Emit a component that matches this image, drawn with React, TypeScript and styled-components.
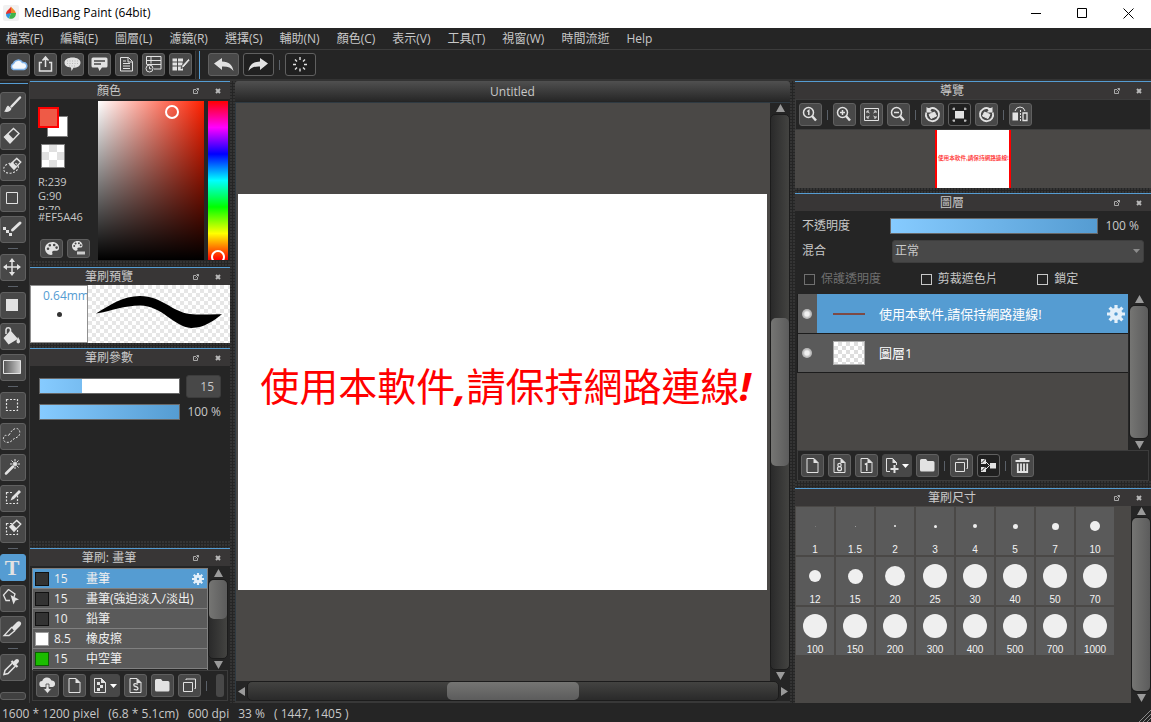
import React from "react";
import styled, { createGlobalStyle, css } from "styled-components";

const BLUE = "#559cd2";
const BG = "#252525";
const LINE = "#3c3c3c";
const PANE = "#4a4846";
const TEXT = "#c8c8c8";

const GlobalStyle = createGlobalStyle`
  *, *::before, *::after { box-sizing: border-box; }
  body {
    margin: 0;
    background: ${BG};
    color: ${TEXT};
    font: 12px/16px "Open Sans", "Noto Sans CJK TC", sans-serif;
  }
  button, input, select { font: inherit; color: inherit; margin: 0; padding: 0; }
  ul { list-style: none; margin: 0; padding: 0; }
  svg { display: block; flex: none; }
`;

const dots = css`
  background: ${BG} radial-gradient(circle at 1px 1px, #343434 1px, transparent 1px) 0 0 / 3px 3px;
`;
const checker = (a: string, size: number) => css`
  background: repeating-conic-gradient(${a} 0 25%, #fff 0 50%) 0 0 / ${size}px ${size}px;
`;

/* ---------- window frame ---------- */
const Window = styled.div`
  min-height: 100vh;
  display: flex;
  flex-direction: column;
`;
const TitleBar = styled.header`
  height: 28px;
  display: flex;
  align-items: center;
  padding-bottom: 2px;
  background: #fff;
  color: #000;
`;
const AppLogo = styled.svg`
  width: 16px;
  height: 16px;
  margin: 0 5px 0 3px;
`;
const AppName = styled.h1`
  flex: 1;
  margin: 0;
  font-size: 12px;
  font-weight: 400;
`;
const WindowButton = styled.button`
  width: 46px;
  height: 24px;
  border: 0;
  background: none;
  display: grid;
  place-items: center;
`;
const MenuBar = styled.nav`
  height: 22px;
  display: flex;
  gap: 17px;
  padding: 0 6px;
  border-bottom: 1px solid ${LINE};
`;
const MenuItem = styled.button`
  border: 0;
  background: none;
  white-space: nowrap;
`;
const TopBar = styled.div`
  height: 31px;
  display: flex;
  border-bottom: 2px solid #333;
`;
const TopGroup = styled.div<{ $dark?: boolean }>`
  display: flex;
  align-items: center;
  gap: 4px;
  padding: 0 3px 0 7px;
  background: ${(p) => (p.$dark ? "#181818" : "none")};
`;
const TopSplitter = styled.div`
  width: 5px;
  margin: 1px 1px 0 0;
  border-left: 1px solid ${LINE};
  border-right: 1px solid ${BLUE};
`;
const Body = styled.main`
  flex: 1;
  display: flex;
`;
const StatusBar = styled.footer`
  height: 19px;
  display: flex;
  align-items: center;
  gap: 9px;
  padding: 2px 0 0 2px;
  white-space: pre;
`;
const StatusFill = styled.span`
  flex: 1;
`;

/* ---------- buttons ---------- */
const IconButton = styled.button<{ $w?: number; $h?: number; $flat?: boolean; $open?: boolean }>`
  flex: none;
  width: ${(p) => p.$w ?? 23}px;
  height: ${(p) => p.$h ?? 23}px;
  border: 1px solid ${(p) => (p.$flat ? "#484848" : "#606060")};
  border-radius: 3px;
  background: ${(p) => (p.$open ? "#202020" : "#484848")};
  display: flex;
  align-items: center;
  justify-content: center;
  overflow: hidden;
  color: #e2e2e2;
`;
const Separator = styled.span<{ $row?: boolean }>`
  flex: none;
  width: ${(p) => (p.$row ? 12 : 3)}px;
  height: ${(p) => (p.$row ? 3 : 12)}px;
  border: 1px solid transparent;
  background: #5a6068;
  background-clip: padding-box;
`;
const CutButton = styled.span`
  width: 8px;
  height: 23px;
  margin-left: 4px;
  border-radius: 3px;
  background: #484848;
`;

/* ---------- tool column ---------- */
const ToolColumn = styled.aside`
  flex: none;
  width: 30px;
  padding-top: 2px;
  border-right: 1px solid ${LINE};
`;
const ToolList = styled.div`
  width: 28px;
  display: flex;
  flex-direction: column;
  gap: 4px;
  padding-top: 8px;
  border-top: 1px solid ${BLUE};
`;
const ToolButton = styled.button<{ $on?: boolean }>`
  width: 26px;
  height: 27px;
  padding: 0;
  border: 1px solid ${(p) => (p.$on ? BLUE : "#606060")};
  border-radius: 3px;
  background: ${(p) => (p.$on ? BLUE : "#484848")};
  color: #e2e2e2;
  display: flex;
  align-items: center;
  justify-content: center;
  overflow: hidden;
`;
const TextGlyph = styled.span`
  padding-right: 2px;
  font: 700 22px/24px "Liberation Serif", serif;
`;
const ToolSeparator = styled(Separator)`
  margin-left: 7px;
`;
const ToolStub = styled.div`
  width: 26px;
  height: 8px;
  margin-top: 7px;
  border: 1px solid #606060;
  border-radius: 3px;
  background: #404040;
`;

/* ---------- docks ---------- */
const Dock = styled.section<{ $w: number }>`
  flex: none;
  width: ${(p) => p.$w}px;
  display: flex;
  flex-direction: column;
`;
const DockHeader = styled.header`
  flex: none;
  height: 18px;
  display: flex;
  align-items: center;
  gap: 6px;
  padding-right: 4px;
  border-top: 1px solid ${BLUE};
  background: #383636;
`;
const DockTitle = styled.h2`
  flex: 1;
  margin: 0 -6px 0 0;
  font-size: 12px;
  line-height: 16px;
  font-weight: 400;
  text-align: center;
`;
const DockButton = styled.button`
  width: 16px;
  height: 16px;
  border: 0;
  background: none;
  display: grid;
  place-items: center;
`;
const Gutter = styled.div<{ $h: number }>`
  flex: none;
  height: ${(p) => p.$h}px;
  ${dots}
`;
const SideGutter = styled.div`
  flex: none;
  width: 5px;
  ${dots}
`;
const DockToolbar = styled.div`
  flex: none;
  height: 31px;
  display: flex;
  align-items: center;
  gap: 4px;
  padding: 0 3px;
  border: 1px solid ${LINE};
`;

/* ---------- scroll bars ---------- */
const ScrollFrame = styled.div<{ $across?: boolean }>`
  flex: none;
  display: flex;
  flex-direction: ${(p) => (p.$across ? "row" : "column")};
  align-items: stretch;
  ${(p) => (p.$across ? "height: 20px;" : "width: 20px;")}
  background: ${BG};
`;
const ScrollArrow = styled.span`
  flex: 0 0 11px;
  display: grid;
  place-items: center;
`;
const ScrollTrack = styled.div<{ $across?: boolean }>`
  flex: 1;
  display: flex;
  flex-direction: ${(p) => (p.$across ? "row" : "column")};
  border: 1px solid #1c1c1c;
  border-radius: 5px;
  background: ${(p) => (p.$across ? "linear-gradient(#434341, #2a2a2a)" : "linear-gradient(90deg, #2a2a2a, #434341)")};
`;
const ScrollSpace = styled.div<{ $n: number }>`
  flex: ${(p) => p.$n} 0 0;
`;
const ScrollThumb = styled.div<{ $n: number; $across?: boolean }>`
  flex: ${(p) => p.$n} 0 0;
  border-radius: 5px;
  background: linear-gradient(${(p) => (p.$across ? "180deg" : "90deg")}, #757573, #5c5c5c);
`;

function ScrollBar({ before, size, after, across }: { before: number; size: number; after: number; across?: boolean }) {
  const first = across ? "M8 0v9L1 4.500z" : "M0 8h9L4.500 0z";
  const last = across ? "M1 0v9l7-4.500z" : "M0 1h9L4.500 9z";
  return (
    <ScrollFrame $across={across} aria-hidden="true">
      <ScrollArrow><svg width="9" height="9"><path d={first} fill="#9a9a9a" /></svg></ScrollArrow>
      <ScrollTrack $across={across}>
        <ScrollSpace $n={before} />
        <ScrollThumb $n={size} $across={across} />
        <ScrollSpace $n={after} />
      </ScrollTrack>
      <ScrollArrow><svg width="9" height="9"><path d={last} fill="#9a9a9a" /></svg></ScrollArrow>
    </ScrollFrame>
  );
}

/* ---------- form parts ---------- */
const Slider = styled.input.attrs({ type: "range" })<{ $fill: number }>`
  appearance: none;
  flex: 1;
  min-width: 0;
  height: 16px;
  border: 1px solid #686868;
  background:
    linear-gradient(90deg, transparent ${(p) => p.$fill}%, #fff ${(p) => p.$fill}%),
    linear-gradient(90deg, #86cbff, ${BLUE});
  &::-webkit-slider-thumb { appearance: none; width: 1px; height: 14px; background: transparent; }
`;
const NumberBox = styled.input`
  width: 35px;
  height: 23px;
  padding-right: 6px;
  border: 1px solid #3c3c3c;
  border-radius: 3px;
  background: #484848;
  text-align: right;
`;
const Percent = styled.output`
  width: 35px;
  white-space: nowrap;
  text-align: right;
`;

/* ---------- colour dock ---------- */
const ColorBody = styled.div`
  height: 162px;
  display: flex;
  gap: 4px;
  padding: 2px 2px 1px 8px;
`;
const ColorInfo = styled.div`
  width: 56px;
  display: flex;
  flex-direction: column;
  font-size: 11px;
  line-height: 14px;
`;
const SwatchPair = styled.div`
  position: relative;
  height: 30px;
  margin-top: 6px;
`;
const Swatch = styled.button<{ $front?: boolean }>`
  position: absolute;
  width: 21px;
  height: 21px;
  ${(p) =>
    p.$front
      ? "left: 0; top: 0; background: #ef5a46; border: 2px solid #f00;"
      : "left: 9px; top: 9px; background: #fff; border: 1px solid #808080;"}
`;
const ClearSwatch = styled.button`
  width: 24px;
  height: 24px;
  margin: 7px 0 7px 3px;
  border: 1px solid #808080;
  ${checker("#e0e0e0", 16)}
  background-position: 7px 7px;
`;
const Channel = styled.span<{ $cut?: boolean }>`
  height: ${(p) => (p.$cut ? 7 : 14)}px;
  overflow: hidden;
`;
const PaletteButtons = styled.div`
  display: flex;
  gap: 4px;
  margin: auto 0 2px 2px;
`;
const ColorField = styled.div`
  position: relative;
  flex: 1;
  overflow: hidden;
  background: linear-gradient(transparent, #000), linear-gradient(90deg, #fff, #ff2000);
`;
const HueStrip = styled.div`
  position: relative;
  width: 20px;
  overflow: hidden;
  background: linear-gradient(#f00, #f0f, #00f, #0ff, #0f0, #ff0, #f00);
`;
const PickRing = styled.span<{ $x: number; $y: number }>`
  position: absolute;
  left: ${(p) => p.$x}%;
  top: ${(p) => p.$y}%;
  width: 14px;
  height: 14px;
  margin: -7px;
  border: 2px solid #fff;
  border-radius: 50%;
`;

/* ---------- brush docks ---------- */
const PreviewBody = styled.div`
  height: 58px;
  display: flex;
`;
const TipPreview = styled.div`
  width: 58px;
  padding: 2px 0 0 12px;
  overflow: hidden;
  border: 1px solid #909090;
  background: #fff;
  color: ${BLUE};
`;
const TipDot = styled.span`
  display: block;
  width: 5px;
  height: 5px;
  margin: 8px 0 0 14px;
  border-radius: 50%;
  background: #333;
`;
const StrokePreview = styled.div`
  flex: 1;
  ${checker("#e6e6e6", 8)}
`;
const ParamBody = styled.div`
  flex: 1;
  display: flex;
  flex-direction: column;
  gap: 2px;
  padding: 8px 9px 0;
  min-height: 60px;
`;
const ParamRow = styled.div`
  height: 24px;
  display: flex;
  align-items: center;
  gap: 6px;
`;
const BrushBody = styled.div`
  display: flex;
  padding: 2px 2px 0 2px;
  height: 104px;
`;
const BrushList = styled.ul`
  flex: 1;
  border: 1px solid #808080;
  border-bottom: 0;
`;
const BrushRow = styled.li<{ $on?: boolean }>`
  height: 20px;
  display: flex;
  align-items: center;
  padding: 0 3px 0 2px;
  border-bottom: 1px solid #808080;
  background: ${(p) => (p.$on ? BLUE : "#5a5a5a")};
  color: #f0f0f0;
`;
const BrushColor = styled.span<{ $c: string; $edge: string }>`
  width: 14px;
  height: 14px;
  margin-right: 5px;
  border: 1px solid ${(p) => p.$edge};
  background: ${(p) => p.$c};
`;
const BrushSize = styled.span`
  width: 32px;
`;
const BrushName = styled.span`
  flex: 1;
  white-space: nowrap;
`;
const BrushToolbar = styled(DockToolbar)`
  margin: 0 2px 2px;
`;

/* ---------- canvas ---------- */
const Center = styled.section`
  flex: 1;
  min-width: 0;
  display: flex;
  flex-direction: column;
  border-bottom: 2px solid #383838;
`;
const DocTab = styled.div`
  height: 20px;
  border-radius: 3px 3px 0 0;
  background: linear-gradient(#505050, #272727);
  line-height: 21px;
  text-align: center;
`;
const DocFrame = styled.div`
  flex: 1;
  display: flex;
  flex-direction: column;
  margin-top: 1px;
  border: solid #2f3a42;
  border-width: 1px 0 0 1px;
`;
const DocRow = styled.div`
  flex: 1;
  display: flex;
`;
const Stage = styled.div`
  flex: 1;
  min-width: 0;
  display: flex;
  align-items: center;
  padding: 0 3px 0 2px;
  background: ${PANE};
`;
const Paper = styled.div`
  flex: 1;
  min-width: 0;
  aspect-ratio: 4 / 3;
  display: flex;
  align-items: center;
  justify-content: center;
  padding: 0 0 14px 6px;
  overflow: hidden;
  background: #fff;
`;
const ArtText = styled.p`
  margin: 0;
  color: #f00;
  white-space: nowrap;
  font: 39px/52px "Noto Sans CJK TC", sans-serif;
`;
const ArtMark = styled.span`
  font-family: "Open Sans", sans-serif;
  font-weight: 700;
  font-style: italic;
`;

/* ---------- navigator and layers ---------- */
const NavView = styled.div`
  height: 58px;
  display: flex;
  justify-content: center;
  background: ${PANE};
`;
const NavPage = styled.div`
  width: 76px;
  display: grid;
  place-items: center;
  border: solid #f00;
  border-width: 0 2px;
  background: #fff;
`;
const LayerForm = styled.div`
  display: flex;
  flex-direction: column;
  padding: 3px 7px 0 7px;
  height: 83px;
`;
const LayerField = styled.div`
  height: 24px;
  display: flex;
  align-items: center;
  & + & { height: 26px; }
`;
const FieldLabel = styled.label`
  width: 88px;
`;
const WidePercent = styled(Percent)`
  width: 46px;
  padding-right: 5px;
`;
const SelectWrap = styled.div`
  flex: 1;
  display: grid;
  margin-left: 2px;
`;
const Select = styled.select`
  appearance: none;
  grid-area: 1 / 1;
  height: 23px;
  padding-left: 2px;
  border: 1px solid #3e3e3e;
  border-radius: 3px;
  background: #484848;
`;
const SelectArrow = styled.svg`
  grid-area: 1 / 1;
  place-self: center end;
  margin-right: 4px;
  pointer-events: none;
`;
const CheckRow = styled.div`
  flex: 1;
  display: grid;
  grid-template-columns: repeat(3, 1fr);
  align-items: center;
  margin-right: -10px;
  padding-left: 2px;
`;
const CheckLabel = styled.label<{ $off?: boolean }>`
  display: flex;
  align-items: center;
  gap: 6px;
  color: ${(p) => (p.$off ? "#707070" : TEXT)};
`;
const Check = styled.input.attrs({ type: "checkbox" })`
  appearance: none;
  width: 11px;
  height: 11px;
  border: 1px solid currentColor;
`;
const LayerBody = styled.div`
  height: 156px;
  display: flex;
  margin: 0 2px;
`;
const LayerList = styled.ul`
  flex: 1;
  margin-right: 1px;
  background: ${PANE};
`;
const LayerRow = styled.li<{ $on?: boolean }>`
  height: ${(p) => (p.$on ? 40 : 39)}px;
  display: flex;
  align-items: center;
  border: 1px solid #1c1c1c;
  border-top: 0;
  border-right: 0;
  background: ${(p) => (p.$on ? `linear-gradient(90deg, #5a5a5a 19px, ${BLUE} 19px)` : "#5a5a5a")};
  color: #fff;
  font-size: 13px;
`;
const LayerEye = styled.span`
  width: 10px;
  height: 10px;
  margin: 0 21px 0 4px;
  border-radius: 50%;
  background: radial-gradient(circle, #f0f0f0 2px, #b8b8b8 4px);
`;
const LayerThumb = styled.span<{ $clear?: boolean }>`
  width: 32px;
  margin-right: 14px;
  ${(p) => (p.$clear ? css`height: 24px; border: 1px solid #aaa; ${checker("#dedede", 8)}` : "height: 2px; background: #7d4a45;")}
`;
const LayerName = styled.span`
  flex: 1;
`;
const GearSlot = styled.span`
  margin-right: 3px;
`;
const LayerToolbar = styled(DockToolbar)`
  margin: 0 2px;
`;

/* ---------- brush sizes ---------- */
const SizeBody = styled.div`
  flex: 1;
  display: flex;
  background: ${PANE};
`;
const SizeGrid = styled.div`
  flex: 1;
  display: grid;
  grid-template-columns: repeat(8, 38px);
  grid-auto-rows: 48px;
  gap: 2px;
  padding: 1px;
  align-content: start;
`;
const SizeCell = styled.button`
  border: 0;
  background: #5a5a5a;
  color: #f4f4f4;
  display: flex;
  flex-direction: column;
  align-items: center;
  font: 10px/10px "Liberation Sans", sans-serif;
`;
const DotBox = styled.span`
  height: 38px;
  display: grid;
  place-items: center;
`;
const Dot = styled.span<{ $d: number; $faint?: number }>`
  width: ${(p) => p.$d}px;
  height: ${(p) => p.$d}px;
  border-radius: 50%;
  background: #efefef;
  opacity: ${(p) => p.$faint ?? 1};
`;

/* ---------- icons ---------- */
type IconDef = { w?: number; h?: number; el: React.ReactNode };
const page = "M6 4.500h7l4 4v10H6z";
const fold = <path d="M12.500 4v5H17.500z" fill="currentColor" stroke="none" />;
const pencil = (x: number, y: number) => (
  <path transform={`translate(${x} ${y})`} d="M9-1l2 2-7 7-3.500 1.500L2 6z" fill="currentColor" stroke="none" />
);
const eraser = (x: number, y: number, s: number) => (
  <g transform={`translate(${x} ${y}) scale(${s})`}>
    <path d="M9.500.500l5.500 5-9 9.500L.500 9z" strokeWidth={1.4 / s} />
    <path d="M.500 9l3.500-3.500 5.500 5.500L6 15z" fill="currentColor" stroke="none" />
  </g>
);
const palette = (
  <path
    fillRule="evenodd"
    d="M7.500 0C3.300 0 0 2.900 0 6.500S3 13 6 13c1.500 0 1.700-1 1.300-2-.5-1.300.2-2.300 1.700-2.300h2.500c1.500 0 2.500-1 2.500-2.700C14 2.500 11.200 0 7.500 0zM3 8a1.300 1.300 0 1 1 0-2.600A1.300 1.300 0 0 1 3 8zm1.800-3.400a1.300 1.300 0 1 1 0-2.600 1.300 1.300 0 0 1 0 2.600zm4.400-.3a1.300 1.300 0 1 1 0-2.600 1.300 1.300 0 0 1 0 2.600zm2.400 2.600a1.300 1.300 0 1 1 0-2.600 1.300 1.300 0 0 1 0 2.600z"
    fill="currentColor"
    stroke="none"
  />
);
const fit = (
  <>
    <path d="M7 8h9v7.500H7z" fill="currentColor" stroke="none" />
    <path d="M4.500 6h2.500M6 4.500V7M18.500 6H16M17 4.500V7M4.500 17.500h2.500M6 19v-2.500M18.500 17.500H16M17 19v-2.500" strokeWidth="1.300" stroke="#bdbdbd" />
  </>
);
const rotate = (
  <>
    <path d="M5.200 9.500A6.600 6.600 0 1 0 9 5.500" strokeWidth="1.800" />
    <path d="M5.500 4v5.500h6l-2-2 1.500-2.500H7z" fill="currentColor" stroke="none" />
    <path d="M8 11.500l5.500-2.500 2 4-5.500 2.500z" fill="currentColor" />
  </>
);
const lens = (inner: React.ReactNode) => (
  <>
    <circle cx="9.500" cy="9.500" r="5" strokeWidth="1.500" />
    <path d="M13 13l4 4.500" strokeWidth="2.500" />
    {inner}
  </>
);
const copies = (
  <>
    <path d="M5.500 8.500h9v9h-9z" />
    <path d="M8 6V5h9.500v9.500H16.500" />
  </>
);
const folder = <path d="M4 6.500q0-1.500 1.500-1.500H10l1.500 2H17q1.500 0 1.500 1.500v7.500q0 1.500-1.500 1.500H5.500Q4 17.500 4 16z" fill="currentColor" stroke="none" />;
const caret = <path d="M20 10h7l-3.500 4z" fill="#fff" stroke="none" />;
const dashBox = <path d="M6.500 7.500h11v11h-11z" strokeDasharray="2 1.500" strokeWidth="1.200" />;

const icons: Record<string, IconDef> = {
  cloud: { el: <path d="M6.500 16.500a3.200 3.200 0 0 1 0-6A5 5 0 0 1 15.500 9.500a3.500 3.500 0 0 1 1.500 7z" fill="#f4f8fc" stroke="#7fb2e8" strokeWidth="1.500" /> },
  share: { el: <path d="M8 9.500H5.500v8.500h12V9.500H15M11.500 14V5M8.500 7.500l3-3.500 3 3.500" strokeWidth="1.500" /> },
  bubble: { el: <><path d="M11.500 4.500c4.700 0 8 2.200 8 5.200s-3 5-7 5.100L10.500 18l-.5-3.500c-4-.3-6.500-2-6.500-4.800 0-3 3.300-5.200 8-5.200z" fill="currentColor" stroke="none" /><path d="M6 8h11M6 10.500h11M8 13h7" stroke="#aaa" strokeWidth=".8" strokeDasharray="1 1.500" /></> },
  comment: { el: <><path d="M5 4.500h13q1.500 0 1.500 1.500v7q0 1.500-1.500 1.500h-4L11.500 18 10 14.500H5Q3.500 14.500 3.500 13V6q0-1.500 1.500-1.500z" fill="currentColor" stroke="none" /><path d="M6 8h11M6 11h7" stroke="#484848" strokeWidth="1.500" /></> },
  doc: { el: <><path d="M5.500 4.500h8l4 4v9.500h-12z" /><path d="M13 4.500V9h4.500M8 8h3M8 10.500h7M8 13h7M8 15.500h7" /></> },
  timeline: { el: <><path d="M4.500 11V3.500h14.500v12.500h-7M4.500 7.500H19M4.500 11.500H19M9 3.500v7" /><circle cx="7.500" cy="15.500" r="3.500" /><path d="M7.500 13.500v2.300h2" /></> },
  script: { el: <><path d="M3.500 5.500h4.500v3H3.500zM9 5.500h5v3H9zM3.500 9.500h4.500v3H3.500zM9 9.500h4.500v3H9zM3.500 13.500h4.500v4H3.500zM9 13.500h5v4H9z" fill="currentColor" stroke="none" /><path d="M19.500 5.500l-6.500 7-1 3 3-1.200 6-7z" fill="currentColor" stroke="#484848" /></> },
  undo: { w: 31, el: <path d="M6 10.500L14 5v3.500c7 .3 10.500 3.500 11.500 9.500-2.500-3.500-6-4.800-11.500-4.500V17z" fill="currentColor" stroke="none" /> },
  redo: { w: 31, el: <path d="M25 10.500L17 5v3.500c-7 .3-10.500 3.500-11.500 9.500 2.500-3.500 6-4.800 11.500-4.500V17z" fill="currentColor" stroke="none" /> },
  busy: { w: 31, el: <path d="M15 4v3M15 15.500v3M8 11.500h3M19 11.500h3M10 6.500L12 8.500M18 14.500l2 2M20 6.500L18 8.500M12 14.500L10 16.500" strokeWidth="1.400" /> },
  brush: { w: 26, h: 27, el: <><path d="M20 5.500l-8.500 9" strokeWidth="2.500" strokeLinecap="round" /><path d="M8 13.500l3.500 3c-.5 3-4.500 4-7.500 3 2-1 1.500-4.500 4-6z" fill="currentColor" stroke="none" /></> },
  eraser: { w: 26, h: 27, el: eraser(4, 5, 1) },
  lassoEraser: { w: 26, h: 27, el: <><ellipse cx="11" cy="14" rx="7.500" ry="5" transform="rotate(-15 11 14)" strokeDasharray="2 1.500" />{eraser(9.5, 4, 0.75)}</> },
  rect: { w: 26, h: 27, el: <path d="M6.500 7.500h11v11h-11z" /> },
  dotPen: { w: 26, h: 27, el: <><path d="M20 7l-7.500 7" strokeWidth="3" strokeLinecap="round" /><path d="M3 11h3v3H3zM6 14h3v3H6zM9 17h3v3H9z" fill="currentColor" stroke="none" /></> },
  move: { w: 26, h: 27, el: <><path d="M12 6v14M4 13h16" strokeWidth="1.500" /><path d="M12 4l3 4H9zM12 22l3-4H9zM3 13l4-3v6zM21 13l-4-3v6z" fill="currentColor" stroke="none" /></> },
  fillRect: { w: 26, h: 27, el: <path d="M6 7h12v12H6z" fill="currentColor" stroke="none" /> },
  bucket: { w: 26, h: 27, el: <><path d="M10 8l7 8.500-8.500 5L3.500 15z" fill="currentColor" stroke="none" /><path d="M6 11V6.500a2.300 2.300 0 0 1 4.500 0v5M10 8l7 8" strokeWidth="1.500" /><path d="M18 14c2 3 2 3.800 2 5a1.800 1.800 0 0 1-3.500 0c0-1.200.5-3 1.500-5z" fill="currentColor" stroke="none" /></> },
  gradient: { w: 26, h: 27, el: <><defs><linearGradient id="toolGradient"><stop offset="0" stopColor="#555" /><stop offset="1" stopColor="#ccc" /></linearGradient></defs><path d="M3.500 6.500h17v13h-17z" fill="url(#toolGradient)" /></> },
  select: { w: 26, h: 27, el: dashBox },
  lasso: { w: 26, h: 27, el: <path d="M9 12c2-3 3-5.500 6.500-6.500 3.500-.5 5 3 4 6-1 3.500-5 3-7 5.500-1.500 2-4.500 3-7 2-3-1.500-2.500-5-.5-6.500 1-.6 2.700.6 4-.5z" strokeDasharray="2 1.500" /> },
  wand: { w: 26, h: 27, el: <><path d="M6 19.500l7-7" strokeWidth="2.500" strokeLinecap="round" /><circle cx="15" cy="10" r="2" fill="currentColor" stroke="none" /><path d="M15 5v2.500M15 12.500V15M10 10h2.500M17.500 10H20M11.500 6.500l2 2M18.500 6.500l-2 2M18.500 13.500l-2-2" /></> },
  selectPen: { w: 26, h: 27, el: <>{dashBox}<path d="M10 16.500l1.500-4L18 6" stroke="#484848" strokeWidth="5" />{pencil(10, 6)}</> },
  selectEraser: { w: 26, h: 27, el: <>{dashBox}<path d="M15 3l7 6-8 8-5-5z" fill="#484848" stroke="none" />{eraser(9.5, 4, 0.75)}</> },
  nodes: { w: 26, h: 27, el: <><path d="M8.500 4.500l6.500 4.500-1 3M10 15.500H6L3.500 10l5-5.500" strokeWidth="1.300" /><path d="M10.500 10l8.500 4.500-3.500 1-2 4z" fill="currentColor" stroke="none" /></> },
  knife: { w: 26, h: 27, el: <><path d="M11.500 11.500l5.500-5.500q2-1.500 3.500 0t-.5 4l-5.500 5.500z" fill="currentColor" stroke="none" /><path d="M12 11l-8 8.500h5l6-5" strokeWidth="1.300" /></> },
  dropper: { w: 26, h: 27, el: <><path d="M12.500 9L5 16.500 4 20.500l4-1 7.500-7.500" strokeWidth="1.500" /><path d="M11.500 7l6 6" strokeWidth="2.200" /><path d="M14.500 9.500l2.500-2.500" strokeWidth="4" strokeLinecap="round" /></> },
  palette: { h: 19, el: <g transform="translate(5 3)">{palette}</g> },
  paletteAdd: { h: 19, el: <><g transform="translate(5 2) scale(.75)">{palette}</g><path d="M9.500 12h9v4h-9z" fill="#ccc" stroke="#484848" /></> },
  cloudDown: { el: <><path d="M6.500 13a3 3 0 0 1-.3-6A5 5 0 0 1 15.500 6.500a3.300 3.300 0 0 1 1 6.500z" fill="currentColor" stroke="none" /><path d="M10 10h3v4.500h2.800L11.500 19.500 7.200 14.500H10z" fill="currentColor" stroke="#484848" strokeWidth=".8" /></> },
  page: { el: <><path d={page} />{fold}</> },
  page8: { el: <><path d={page} />{fold}<circle cx="11.500" cy="11" r="1.700" strokeWidth="1.200" /><circle cx="11.500" cy="14.700" r="2" strokeWidth="1.200" /></> },
  page1: { el: <><path d={page} />{fold}<path d="M9.800 10.500l2-1v7.500" strokeWidth="1.400" /></> },
  pageS: { el: <><path d={page} />{fold}<path d="M14 10.200q-4-1.500-4.200.7 0 1.200 2 1.600 2.200.4 2.200 1.900-.2 2.300-4.300 1" strokeWidth="1.300" /></> },
  pageImage: { w: 30, el: <><path d="M4.500 4.500h7l4 4v10h-11z" /><path d="M11 4v5h5zM7 8h3v3H7zM10 11h3v3h-3zM7 14h3v3H7z" fill="currentColor" stroke="none" />{caret}</> },
  pageAdd: { w: 30, el: <><path d="M8 17.500H4.500v-13h6l4 4V11" /><path d="M10.500 4v5h4.500z" fill="currentColor" stroke="none" /><path d="M12.500 11v8M8.500 15h8" strokeWidth="2" />{caret}</> },
  folder: { el: folder },
  copies: { el: copies },
  merge: { el: <><path d="M4 5h5v5H4zM4 13h5v5H4zM13 9h6v5.500h-6z" fill="currentColor" stroke="none" /><path d="M4.500 9l4-4M4.500 17l4-4" stroke="#222" /><path d="M9 8l3.500 3.500L9 15" /></> },
  trash: { el: <><path d="M4.500 7h14M9.500 6.500V5h4v1.500" strokeWidth="1.800" /><path d="M6.800 9.500V18h9.400V9.500M10 9.500V18M13 9.500V18" strokeWidth="1.800" /></> },
  zoom1: { el: lens(<path d="M8.300 8.500l1.500-1v4.500" strokeWidth="1.500" />) },
  zoomIn: { el: lens(<path d="M7 9.500h5M9.500 7v5" strokeWidth="1.500" />) },
  zoomOut: { el: lens(<path d="M7 9.500h5" strokeWidth="1.500" />) },
  expand: { el: <><path d="M4.500 5.500h14v12h-14z" /><path d="M7 10V8h2M14 8h2v2M7 13v2h2M14 15h2v-2M7.500 8.500l2 1.500M15.500 8.500l-2 1.500M7.500 14.500l2-1.500M15.500 14.500l-2-1.500" /></> },
  rotateLeft: { el: rotate },
  fit: { el: fit },
  rotateRight: { el: <g transform="translate(23 0) scale(-1 1)">{rotate}</g> },
  flip: { el: <><path d="M3.500 9.500h5.500v8H3.500z" fill="currentColor" stroke="none" /><path d="M14 10h4v7.500h-4z" strokeWidth="1.300" /><path d="M11.500 7v12" strokeDasharray="2 1" /><path d="M6 8q1-4 5-4t5 4" /></> },
};

function Icon({ name }: { name: string }) {
  const { w = 23, h = 23, el } = icons[name];
  return (
    <svg width={w} height={h} viewBox={`0 0 ${w} ${h}`} fill="none" stroke="currentColor" aria-hidden="true">
      {el}
    </svg>
  );
}

function Gear({ size }: { size: number }) {
  return (
    <svg width={size} height={size} viewBox="0 0 18 18" aria-hidden="true">
      <path d="M9 0v18M0 9h18M2.600 2.600l12.800 12.800M15.400 2.600L2.600 15.400" stroke="#e4f0fa" strokeWidth="3.200" />
      <circle cx="9" cy="9" r="4" fill={BLUE} stroke="#e4f0fa" strokeWidth="4.500" />
    </svg>
  );
}

type Btn = [icon: string, label: string, open?: boolean] | "|";

function Buttons({ items }: { items: Btn[] }) {
  return (
    <>
      {items.map((it, i) =>
        it === "|" ? (
          <Separator key={i} />
        ) : (
          <IconButton key={i} aria-label={it[1]} $w={icons[it[0]].w} $h={icons[it[0]].h} $open={it[2]} $flat={icons[it[0]].w === 30}>
            <Icon name={it[0]} />
          </IconButton>
        )
      )}
    </>
  );
}

function Header({ title }: { title: string }) {
  return (
    <DockHeader>
      <DockTitle>{title}</DockTitle>
      <DockButton aria-label={`${title} float`}>
        <svg width="6" height="6" fill="none" stroke="#a8a8a8"><path d="M3 1.500H.500v4h4V3M2.500 3.500L5.500.500M3.500.500h2v2" /></svg>
      </DockButton>
      <DockButton aria-label={`${title} close`}>
        <svg width="6" height="6" stroke="#b8b8b8" strokeWidth="2"><path d="M1 1l4 4M5 1L1 5" /></svg>
      </DockButton>
    </DockHeader>
  );
}

const menus = ["檔案(F)", "編輯(E)", "圖層(L)", "濾鏡(R)", "選擇(S)", "輔助(N)", "顏色(C)", "表示(V)", "工具(T)", "視窗(W)", "時間流逝", "Help"];

const tools = [
  "brush", "eraser", "lassoEraser", "rect", "dotPen", "|", "move", "|", "fillRect", "bucket", "gradient", "|",
  "select", "lasso", "wand", "selectPen", "selectEraser", "|", "text", "nodes", "knife", "|", "dropper",
];

const brushes = [
  { size: "15", name: "畫筆", color: "#333", edge: "#111" },
  { size: "15", name: "畫筆(強迫淡入/淡出)", color: "#333", edge: "#111" },
  { size: "10", name: "鉛筆", color: "#333", edge: "#111" },
  { size: "8.5", name: "橡皮擦", color: "#fff", edge: "#999" },
  { size: "15", name: "中空筆", color: "#1bbd00", edge: "#0a6000" },
];

const sizes: [label: string, dot: number, faint?: number][] = [
  ["1", 1, 0.3], ["1.5", 1, 0.6], ["2", 2], ["3", 3], ["4", 4], ["5", 5], ["7", 7], ["10", 10],
  ["12", 12], ["15", 15], ["20", 20], ["25", 24], ["30", 24], ["40", 24], ["50", 24], ["70", 24],
  ["100", 24], ["150", 24], ["200", 24], ["300", 24], ["400", 24], ["500", 24], ["700", 24], ["1000", 24],
];

export default function App() {
  return (
    <>
      <GlobalStyle />
      <Window>
        <TitleBar>
          <AppLogo viewBox="0 0 16 16" aria-hidden="true">
            <rect width="16" height="16" rx="2" fill="#f1f1f1" />
            <path d="M8 1.500c1 2 5 4 5 7.500H8z" fill="#f0862a" />
            <path d="M8 1.500C7 4 3 5.500 3 9H8z" fill="#e5322d" />
            <path d="M3 9A5 5 0 0 0 6 13.500L8 8z" fill="#2d9be0" />
            <path d="M13 8c0 4.500-3.500 6.700-7 5.500L8 8z" fill="#3db54a" />
          </AppLogo>
          <AppName>MediBang Paint (64bit)</AppName>
          <WindowButton aria-label="Minimize"><svg width="11" height="11" stroke="#000"><path d="M0 5.500h10" /></svg></WindowButton>
          <WindowButton aria-label="Maximize"><svg width="11" height="11" stroke="#000" fill="none"><path d="M.500.500h9v9h-9z" /></svg></WindowButton>
          <WindowButton aria-label="Close"><svg width="11" height="11" stroke="#000"><path d="M.500.500l10 10M10.500.500l-10 10" /></svg></WindowButton>
        </TitleBar>

        <MenuBar>
          {menus.map((m) => <MenuItem key={m}>{m}</MenuItem>)}
        </MenuBar>

        <TopBar>
          <TopGroup $dark>
            <Buttons items={[["cloud", "Cloud"], ["share", "Share"], ["bubble", "Talk"], ["comment", "Comment"], ["doc", "Document"], ["timeline", "Timeline"], ["script", "Script"]]} />
          </TopGroup>
          <TopSplitter />
          <TopGroup>
            <Buttons items={[["undo", "Undo"], ["redo", "Redo", true], "|", ["busy", "Progress", true]]} />
          </TopGroup>
        </TopBar>

        <Body>
          <ToolColumn>
            <ToolList>
              {tools.map((t, i) =>
                t === "|" ? (
                  <ToolSeparator key={i} $row />
                ) : (
                  <ToolButton key={i} aria-label={t} $on={t === "text"}>
                    {t === "text" ? <TextGlyph>T</TextGlyph> : <Icon name={t} />}
                  </ToolButton>
                )
              )}
              <ToolStub />
            </ToolList>
          </ToolColumn>

          <Dock $w={200}>
            <Header title="顏色" />
            <ColorBody>
              <ColorInfo>
                <SwatchPair>
                  <Swatch aria-label="Background colour" />
                  <Swatch aria-label="Foreground colour" $front />
                </SwatchPair>
                <ClearSwatch aria-label="Transparent" />
                <Channel>R:239</Channel>
                <Channel>G:90</Channel>
                <Channel $cut>B:70</Channel>
                <Channel>#EF5A46</Channel>
                <PaletteButtons>
                  <Buttons items={[["palette", "Palette"], ["paletteAdd", "Add to palette"]]} />
                </PaletteButtons>
              </ColorInfo>
              <ColorField><PickRing $x={70} $y={7} /></ColorField>
              <HueStrip><PickRing $x={50} $y={98} /></HueStrip>
            </ColorBody>
            <Gutter $h={6} />

            <Header title="筆刷預覽" />
            <PreviewBody>
              <TipPreview>0.64mm<TipDot /></TipPreview>
              <StrokePreview>
                <svg width="142" height="58">
                  <path d="M8 28.500C22 20 35 11 52 11c22 0 32 16 50 18 12 1.300 22-.2 32 .3-8 6-18 14-31 13.700C86 42 74 20.500 52 20.500c-16 0-28 5.500-44 8z" />
                </svg>
              </StrokePreview>
            </PreviewBody>
            <Gutter $h={5} />

            <Header title="筆刷參數" />
            <ParamBody>
              <ParamRow>
                <Slider aria-label="筆刷尺寸" defaultValue={30} $fill={30} />
                <NumberBox aria-label="尺寸" defaultValue="15" />
              </ParamRow>
              <ParamRow>
                <Slider aria-label="筆刷不透明度" defaultValue={100} $fill={100} />
                <Percent>100 %</Percent>
              </ParamRow>
            </ParamBody>
            <Gutter $h={7} />

            <Header title="筆刷: 畫筆" />
            <BrushBody>
              <BrushList>
                {brushes.map((b, i) => (
                  <BrushRow key={b.name} $on={i === 0}>
                    <BrushColor $c={b.color} $edge={b.edge} />
                    <BrushSize>{b.size}</BrushSize>
                    <BrushName>{b.name}</BrushName>
                    {i === 0 && <Gear size={12} />}
                  </BrushRow>
                ))}
              </BrushList>
              <ScrollBar before={0} size={39} after={40} />
            </BrushBody>
            <BrushToolbar>
              <Buttons items={[["cloudDown", "Download"], ["page", "New"], ["pageImage", "New from image"], ["pageS", "Script brush"], ["folder", "Folder"], ["copies", "Duplicate"], "|"]} />
              <CutButton />
            </BrushToolbar>
          </Dock>

          <SideGutter />
          <Center>
            <DocTab>Untitled</DocTab>
            <DocFrame>
              <DocRow>
                <Stage>
                  <Paper>
                    <ArtText>使用本軟件<ArtMark>,</ArtMark>請保持網路連線<ArtMark>!</ArtMark></ArtText>
                  </Paper>
                </Stage>
                <ScrollBar before={204} size={150} after={204} />
              </DocRow>
              <ScrollBar across before={199} size={133} after={199} />
            </DocFrame>
          </Center>
          <SideGutter />

          <Dock $w={356}>
            <Header title="導覽" />
            <DockToolbar>
              <Buttons items={[["zoom1", "Actual size"], "|", ["zoomIn", "Zoom in"], ["expand", "Fit"], ["zoomOut", "Zoom out"], "|", ["rotateLeft", "Rotate left"], ["fit", "Reset rotation", true], ["rotateRight", "Rotate right"], "|", ["flip", "Flip"]]} />
            </DockToolbar>
            <NavView>
              <NavPage>
                <svg width="72" height="10" viewBox="0 0 498 69">
                  <text x="252" y="44" textAnchor="middle" fill="#f22" fontSize="39" fontWeight="500" fontFamily="Noto Sans CJK TC, sans-serif">使用本軟件,請保持網路連線!</text>
                </svg>
              </NavPage>
            </NavView>
            <Gutter $h={5} />

            <Header title="圖層" />
            <LayerForm>
              <LayerField>
                <FieldLabel htmlFor="opacity">不透明度</FieldLabel>
                <Slider id="opacity" defaultValue={100} $fill={100} />
                <WidePercent>100 %</WidePercent>
              </LayerField>
              <LayerField>
                <FieldLabel htmlFor="blend">混合</FieldLabel>
                <SelectWrap>
                  <Select id="blend"><option>正常</option></Select>
                  <SelectArrow width="7" height="4"><path d="M0 0h7L3.500 4z" fill="#8c8c8c" /></SelectArrow>
                </SelectWrap>
              </LayerField>
              <CheckRow>
                <CheckLabel $off><Check disabled />保護透明度</CheckLabel>
                <CheckLabel><Check />剪裁遮色片</CheckLabel>
                <CheckLabel><Check />鎖定</CheckLabel>
              </CheckRow>
            </LayerForm>
            <LayerBody>
              <LayerList>
                <LayerRow $on>
                  <LayerEye />
                  <LayerThumb />
                  <LayerName>使用本軟件,請保持網路連線!</LayerName>
                  <GearSlot><Gear size={18} /></GearSlot>
                </LayerRow>
                <LayerRow>
                  <LayerEye />
                  <LayerThumb $clear />
                  <LayerName>圖層1</LayerName>
                </LayerRow>
              </LayerList>
              <ScrollBar before={0} size={1} after={0} />
            </LayerBody>
            <LayerToolbar>
              <Buttons items={[["page", "New layer"], ["page8", "New 8bit layer"], ["page1", "New 1bit layer"], ["pageAdd", "Add layer"], ["folder", "New folder"], "|", ["copies", "Duplicate layer"], ["merge", "Merge layer", true], "|", ["trash", "Delete layer"]]} />
            </LayerToolbar>
            <Gutter $h={7} />

            <Header title="筆刷尺寸" />
            <SizeBody>
              <SizeGrid>
                {sizes.map(([label, dot, faint]) => (
                  <SizeCell key={label}>
                    <DotBox><Dot $d={dot} $faint={faint} /></DotBox>
                    {label}
                  </SizeCell>
                ))}
              </SizeGrid>
              <ScrollBar before={0} size={1} after={0} />
            </SizeBody>
          </Dock>
        </Body>

        <StatusBar>
          <span>1600 * 1200 pixel</span>
          <span>(6.8 * 5.1cm)</span>
          <span>600 dpi</span>
          <span>33 %</span>
          <span>( 1447, 1405 )</span>
          <StatusFill />
          <svg width="12" height="17" stroke="#8a8a8a"><path d="M0 17L12 5M4 17l8-8M8 17l4-4" /></svg>
        </StatusBar>
      </Window>
    </>
  );
}
